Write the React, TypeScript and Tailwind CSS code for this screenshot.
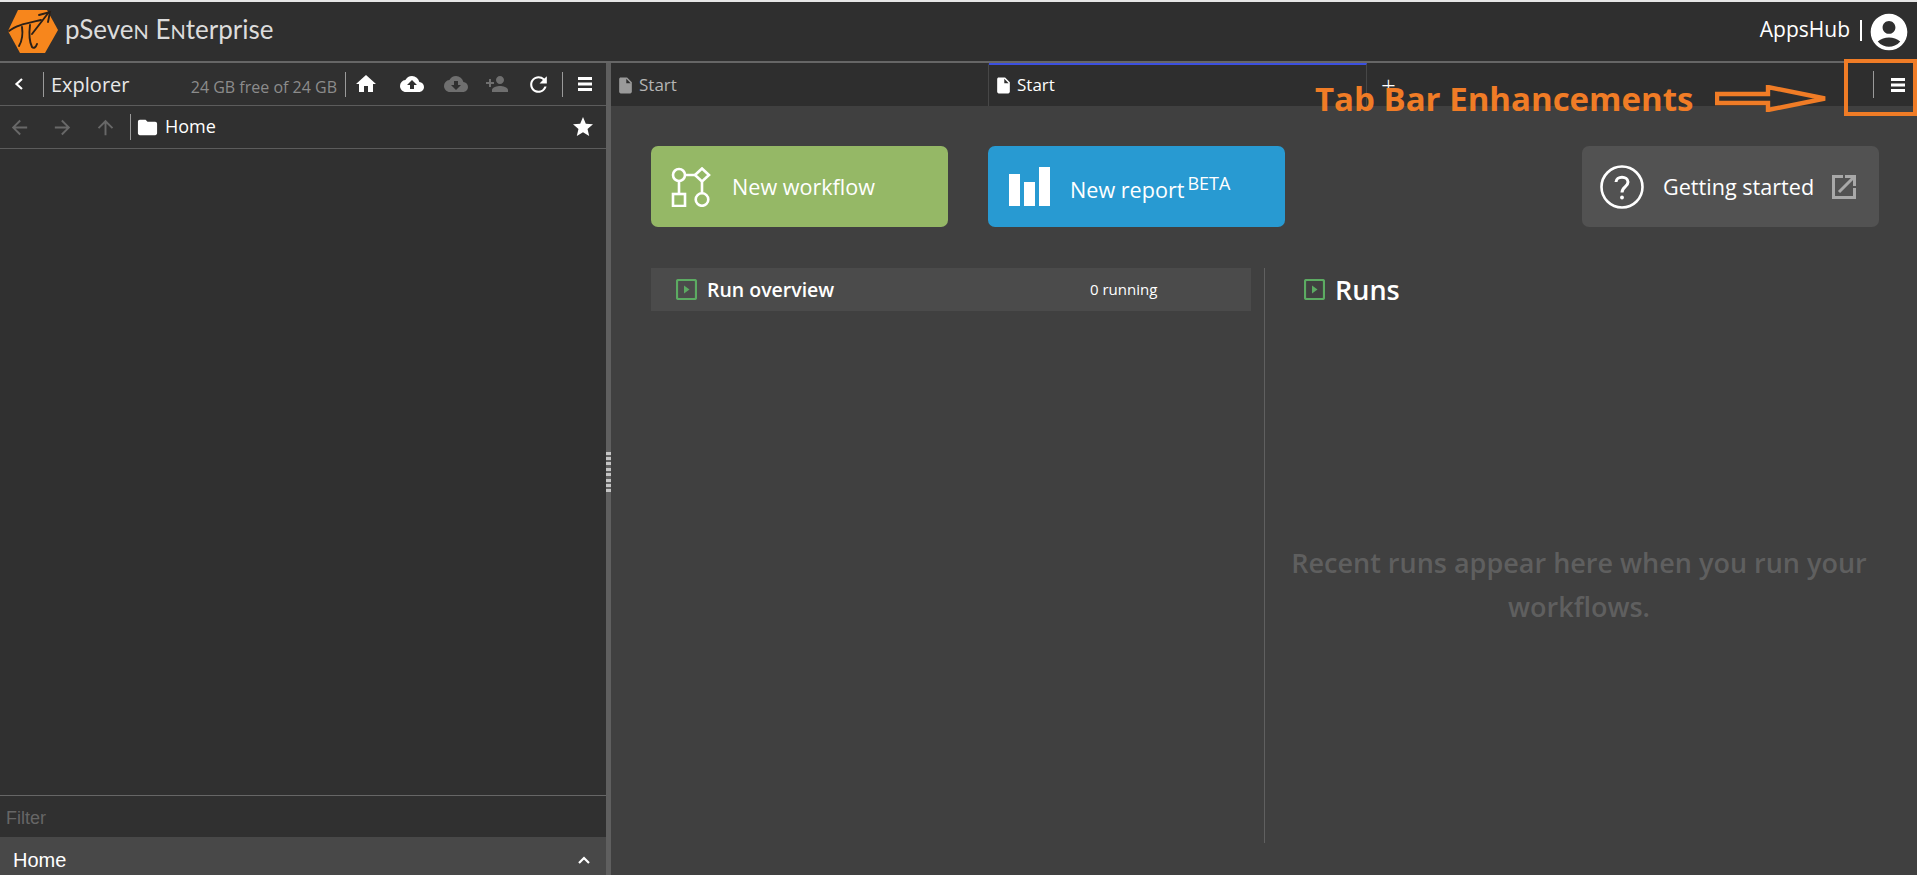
import {
  MdAccountCircle,
  MdArrowBack,
  MdArrowForward,
  MdArrowUpward,
  MdCloudDownload,
  MdCloudUpload,
  MdFolder,
  MdHome,
  MdInsertDriveFile,
  MdPersonAdd,
  MdRefresh,
  MdStar,
} from "react-icons/md";

const SANS = "font-['Open_Sans','Noto_Sans',sans-serif]";

function Bars({ className = "" }: { className?: string }) {
  return (
    <svg width="14" height="14" viewBox="0 0 14 14" className={className} fill="currentColor">
      <rect x="0" y="0" width="14" height="3" />
      <rect x="0" y="5.5" width="14" height="3" />
      <rect x="0" y="11" width="14" height="3" />
    </svg>
  );
}

function Logo() {
  return (
    <svg width="50" height="43" viewBox="0 0 50 43" className="shrink-0">
      <polygon points="10,0 39,0 50,20 37,43 12,43 0,21" fill="#f7861c" />
      <g fill="none" stroke="#2b2018" strokeWidth="1.9" strokeLinecap="round">
        <path d="M1 21 C8 15 20 13 33 10" />
        <path d="M14 17 C15 24 14 31 11 36" />
        <path d="M22 15 C21 23 21 31 24 37 C26 39 28 37 29 34" />
        <path d="M24 24 L41 2" />
        <path d="M31 5 L42 2 L40 12" />
      </g>
    </svg>
  );
}

function RunIcon() {
  return (
    <svg width="21" height="21" viewBox="0 0 21 21" className="shrink-0">
      <rect x="1" y="1" width="19" height="19" rx="1.5" fill="none" stroke="#5cab62" strokeWidth="2.2" />
      <polygon points="8,6.5 13.5,10.5 8,14.5" fill="#5cab62" />
    </svg>
  );
}

function WorkflowIcon() {
  return (
    <svg width="40" height="40" viewBox="0 0 40 40" className="shrink-0" fill="none" stroke="#fff" strokeWidth="2.6">
      <circle cx="8" cy="8" r="6" />
      <path d="M24 8 L31 1.5 L38 8 L31 14.5 Z" />
      <rect x="2" y="27" width="12" height="12" />
      <circle cx="31" cy="32.5" r="6.3" />
      <path d="M14 8 H24 M8 14 V27 M31 14.5 V26" />
    </svg>
  );
}

function ChartIcon() {
  return (
    <svg width="41" height="39" viewBox="0 0 41 39" className="shrink-0" fill="#fff">
      <rect x="0" y="7" width="11" height="32" />
      <rect x="15" y="15" width="11" height="24" />
      <rect x="30" y="0" width="11" height="39" />
    </svg>
  );
}

function ExternalIcon() {
  return (
    <svg width="24" height="24" viewBox="0 0 24 24" className="ml-[18px] shrink-0" fill="none" stroke="#a8a8a8" strokeWidth="3">
      <path d="M11 1.5 H1.5 V22.5 H22.5 V13" />
      <path d="M7 17 L21 3 M13 1.5 H22.5 V11" />
    </svg>
  );
}

function Tab({ active }: { active?: boolean }) {
  return (
    <div
      className={`flex h-full w-[378px] items-center border-r border-[#474747] pl-[5px] ${
        active ? "border-t-2 border-t-[#3b4fe0] text-white" : "border-t-2 border-t-[#2e2e2e] text-[#b5b5b5]"
      }`}
    >
      <MdInsertDriveFile size={19} className={active ? "text-white" : "text-[#9a9a9a]"} />
      <span className="mb-[2px] ml-[4px] text-[17px]">Start</span>
    </div>
  );
}

export default function App() {
  return (
    <div className={`flex h-screen w-full flex-col overflow-hidden bg-[#404040] ${SANS}`}>
      <div className="h-[2px] shrink-0 bg-[#e6e6e6]" />

      {/* top bar */}
      <header className="flex h-[59px] shrink-0 items-center bg-[#2f2f2f] pl-[8px] pr-[9px]">
        <Logo />
        <span className="mb-[5px] ml-[7px] font-['Lato',sans-serif] text-[26px] font-normal leading-none text-[#dcdcdc]">
          pSeve<span className="text-[20px]">N</span> E<span className="text-[20px]">N</span>terprise
        </span>
        <span className="mb-[3px] ml-auto text-[21px] text-white">AppsHub</span>
        <span className="mb-[3px] ml-[10px] mr-[8px] h-[21px] w-[2px] bg-white" />
        <MdAccountCircle size={44} className="-mx-[3px] text-white" />
      </header>
      <div className="h-[2px] shrink-0 bg-[#666666]" />

      <div className="flex min-h-0 flex-1">
        {/* explorer */}
        <aside className="flex w-[606px] shrink-0 flex-col bg-[#303030]">
          <div className="flex h-[42px] shrink-0 items-center">
            <svg width="10" height="12" viewBox="0 0 10 12" className="ml-[14px] shrink-0" fill="none" stroke="#fff" strokeWidth="2.2">
              <path d="M8 1 L2.5 6 L8 11" />
            </svg>
            <span className="ml-[19px] h-[25px] w-px bg-[#9a9a9a]" />
            <span className="ml-[7px] mt-[2px] text-[20px] text-[#e8e8e8]">Explorer</span>
            <span className="ml-auto mt-[5px] text-[16px] text-[#8c8c8c]">24 GB free of 24 GB</span>
            <span className="ml-[8px] h-[25px] w-px bg-[#9a9a9a]" />
            <MdHome size={24} className="ml-[8px] text-white" />
            <MdCloudUpload size={24} className="ml-[22px] text-white" />
            <MdCloudDownload size={24} className="ml-[20px] text-[#6f6f6f]" />
            <MdPersonAdd size={24} className="ml-[17px] text-[#6f6f6f]" />
            <MdRefresh size={25} className="ml-[17px] text-white" />
            <span className="ml-[11px] h-[25px] w-px bg-[#9a9a9a]" />
            <Bars className="ml-[15px] mr-[14px] text-white" />
          </div>

          <div className="flex h-[44px] shrink-0 items-center border-y border-[#5c5c5c]">
            <MdArrowBack size={23} className="ml-[8px] text-[#686868]" />
            <MdArrowForward size={23} className="ml-[20px] text-[#686868]" />
            <MdArrowUpward size={23} className="ml-[20px] text-[#686868]" />
            <span className="ml-[13px] h-[26px] w-px bg-[#9a9a9a]" />
            <MdFolder size={23} className="ml-[5px] text-white" />
            <span className="mb-[2px] ml-[6px] text-[18px] text-white">Home</span>
            <MdStar size={24} className="ml-auto mr-[11px] text-white" />
          </div>

          <div className="min-h-0 flex-1" />

          <div className="flex h-[42px] shrink-0 items-center border-t border-[#666666] pl-[6px] pt-[3px] font-['Liberation_Sans',sans-serif] text-[18px] text-[#666666]">
            Filter
          </div>
          <div className="flex h-[38px] shrink-0 items-center justify-between bg-[#484848] pl-[13px] pr-[16px] pt-[8px] font-['Liberation_Sans',sans-serif] text-[20px] text-white">
            <span>Home</span>
            <svg width="12" height="8" viewBox="0 0 12 8" fill="none" stroke="#fff" strokeWidth="2.2">
              <path d="M1 7 L6 2 L11 7" />
            </svg>
          </div>
        </aside>

        {/* resize handle */}
        <div className="flex w-[5px] shrink-0 flex-col items-center justify-center gap-[2.4px] bg-[#5f5f5f] pt-[6px]">
          {Array.from({ length: 8 }).map((_, i) => (
            <span key={i} className="h-[3px] w-[5px] bg-[#c4c4c4]" />
          ))}
        </div>

        {/* workspace */}
        <main className="flex min-w-0 flex-1 flex-col">
          <div className="flex h-[43px] shrink-0 items-center bg-[#2e2e2e] text-white">
            <Tab />
            <Tab active />
            <span className="ml-[14px] text-[26px] font-light leading-none">+</span>
            <span className="ml-auto h-[27px] w-px bg-[#9a9a9a]" />
            <Bars className="ml-[17px] mr-[12px] text-white" />
          </div>

          <div className="flex min-h-0 flex-1 flex-col pl-[40px] pr-[38px] pt-[40px]">
            <div className="flex shrink-0">
              <button className="flex h-[81px] w-[297px] items-center rounded-[7px] bg-[#95b866] pl-[20px] text-[21.6px] text-white">
                <WorkflowIcon />
                <span className="ml-[21px] mt-[2px]">New workflow</span>
              </button>
              <button className="ml-[40px] flex h-[81px] w-[297px] items-center rounded-[7px] bg-[#289ad2] pl-[21px] text-[21.6px] text-white">
                <ChartIcon />
                <span className="ml-[20px] mt-[7px]">New report</span>
                <span className="mb-[7px] ml-[3px] text-[18px]">BETA</span>
              </button>
              <button className="ml-auto flex h-[81px] w-[297px] items-center rounded-[7px] bg-[#525252] pl-[18px] text-[21.6px] text-white">
                <svg width="44" height="44" viewBox="0 0 44 44" className="shrink-0" fill="none" stroke="#fff" strokeWidth="2.6">
                  <circle cx="22" cy="22" r="20.5" />
                  <path d="M16 17 C16 10.5 28 10.5 28 17 C28 22 22 22 22 27.5" strokeWidth="3" />
                  <circle cx="22" cy="32.5" r="1.9" fill="#fff" stroke="none" />
                </svg>
                <span className="ml-[19px] mt-[2px]">Getting started</span>
                <ExternalIcon />
              </button>
            </div>

            <div className="mt-[41px] flex h-[575px] shrink-0">
              <div className="w-[600px] shrink-0">
                <div className="flex h-[43px] items-center bg-[#4b4b4b] pl-[25px]">
                  <RunIcon />
                  <span className="ml-[10px] text-[19.5px] font-semibold text-white">Run overview</span>
                  <span className="absolute left-[1090px] text-[15px] text-white">0 running</span>
                </div>
              </div>
              <div className="-mr-[14px] ml-[13px] flex min-w-0 flex-1 flex-col border-l border-[#606060]">
                <div className="flex h-[43px] shrink-0 items-center pl-[39px]">
                  <RunIcon />
                  <span className="ml-[10px] mt-[1px] text-[27px] font-semibold text-white">Runs</span>
                </div>
                <p className="mt-[230px] w-full text-center text-[27px] font-semibold leading-[44px] text-[#5f5f5f]">
                  Recent runs appear here when you run your workflows.
                </p>
              </div>
            </div>
          </div>
        </main>
      </div>

      {/* annotation drawn over the tab bar */}
      <span className="absolute left-[1315px] top-[79px] text-[33px] font-bold leading-[40px] text-[#f07c26]">
        Tab Bar Enhancements
      </span>
      <svg width="113" height="27" viewBox="0 0 113 27" className="absolute left-[1715px] top-[85px]" fill="none" stroke="#f07c26" strokeWidth="4.4">
        <path d="M2 9 H53 V2 L110 13.5 L53 25 V18 H2 Z" />
      </svg>
      <div className="absolute left-[1844px] top-[59px] h-[57px] w-[73px] border-[4px] border-[#f07c26]" />
    </div>
  );
}
